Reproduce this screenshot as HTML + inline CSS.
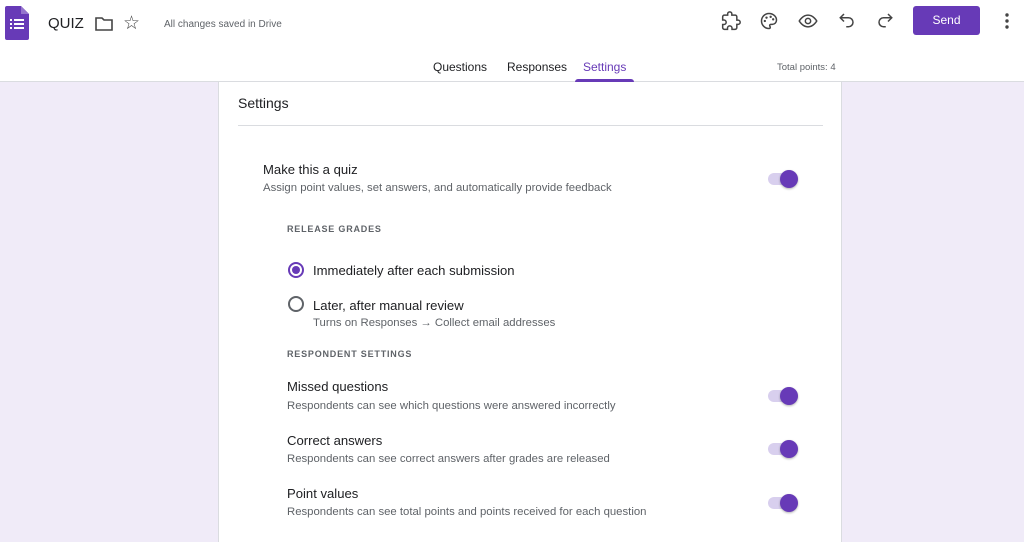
<!DOCTYPE html>
<html><head><meta charset="utf-8"><style>
*{margin:0;padding:0;box-sizing:border-box}
body{width:1024px;height:538px;overflow:hidden;background:#f0ebf8;font-family:"Liberation Sans",Arial,sans-serif;position:relative;color:#202124}
.hdr{position:absolute;left:0;top:0;width:1024px;height:82px;background:#fff;border-bottom:1px solid #dadce0}
.a{position:absolute;white-space:nowrap}
.card{position:absolute;left:218px;top:82px;width:624px;height:460px;background:#fff;border-left:1px solid #dadce0;border-right:1px solid #dadce0}
.tog{position:absolute;width:32px;height:14px}
.tog .t{position:absolute;left:0;top:0;width:30px;height:12px;border-radius:6px;background:#d8cfee}
.tog .k{position:absolute;left:12px;top:-3px;width:18px;height:18px;border-radius:50%;background:#673ab7;box-shadow:0 1px 2px rgba(0,0,0,.3)}
.h{font-size:13.1px;color:#202124}
.s{font-size:11.35px;color:#5f6368}
.cap{font-size:9px;letter-spacing:.8px;color:#5f6368;font-weight:bold}
</style></head><body>
<div class="hdr">
<svg class="a" style="left:5px;top:6px" width="24" height="34" viewBox="0 0 24 34"><path d="M2 0h14l8 8v24a2 2 0 0 1-2 2H2a2 2 0 0 1-2-2V2a2 2 0 0 1 2-2z" fill="#673ab7"/><path d="M16 0l8 8h-8z" fill="#9575cd"/><g fill="#fff"><rect x="5" y="13" width="2" height="2"/><rect x="9" y="13" width="10" height="2"/><rect x="5" y="17" width="2" height="2"/><rect x="9" y="17" width="10" height="2"/><rect x="5" y="21" width="2" height="2"/><rect x="9" y="21" width="10" height="2"/></g></svg>
<div class="a" style="left:48px;top:15px;font-size:15px">QUIZ</div>
<svg class="a" style="left:95px;top:16px" width="18" height="16" viewBox="0 0 18 16"><path d="M1 2h6l2 2h8v10H1z" fill="none" stroke="#444" stroke-width="1.6"/></svg>
<div class="a" style="left:123px;top:12px;font-size:19px;color:#444">☆</div>
<div class="a" style="left:164px;top:19px;font-size:10px;color:#5f6368">All changes saved in Drive</div>
<svg class="a" style="left:721px;top:11px" width="20" height="20" viewBox="0 0 24 24"><path d="M20.5 11H19V7a2 2 0 0 0-2-2h-4V3.5a2.5 2.5 0 0 0-5 0V5H4a2 2 0 0 0-2 2v3.8h1.5a2.7 2.7 0 0 1 0 5.4H2V20a2 2 0 0 0 2 2h3.8v-1.5a2.7 2.7 0 0 1 5.4 0V22H17a2 2 0 0 0 2-2v-4h1.5a2.5 2.5 0 0 0 0-5z" fill="none" stroke="#444" stroke-width="1.8"/></svg>
<svg class="a" style="left:759px;top:11px" width="20" height="20" viewBox="0 0 24 24"><path d="M12 3a9 9 0 0 0 0 18c1 0 1.5-.7 1.5-1.5 0-.9-.7-1.2-.7-2 0-.8.7-1.5 1.5-1.5H16a5 5 0 0 0 5-5c0-4.4-4-8-9-8z" fill="none" stroke="#444" stroke-width="1.8"/><circle cx="7" cy="12" r="1.4" fill="#444"/><circle cx="9" cy="8" r="1.4" fill="#444"/><circle cx="14" cy="7" r="1.4" fill="#444"/><circle cx="17" cy="10" r="1.4" fill="#444"/></svg>
<svg class="a" style="left:797px;top:11px" width="22" height="20" viewBox="0 0 24 24"><path d="M1.5 12S5.5 5 12 5s10.5 7 10.5 7-4 7-10.5 7S1.5 12 1.5 12z" fill="none" stroke="#444" stroke-width="1.8"/><circle cx="12" cy="12" r="3.2" fill="none" stroke="#444" stroke-width="1.8"/></svg>
<svg class="a" style="left:838px;top:11px" width="18" height="18" viewBox="0 0 24 24"><path d="M8 4L3 9l5 5M3 9h11a6 6 0 0 1 0 12h-3" fill="none" stroke="#444" stroke-width="2"/></svg>
<svg class="a" style="left:876px;top:11px" width="18" height="18" viewBox="0 0 24 24"><path d="M16 4l5 5-5 5M21 9H10a6 6 0 0 0 0 12h3" fill="none" stroke="#444" stroke-width="2"/></svg>
<div class="a" style="left:913px;top:6px;width:67px;height:29px;background:#673ab7;border-radius:3px;color:#fff;font-size:12px;text-align:center;line-height:29px">Send</div>
<svg class="a" style="left:1004px;top:12px" width="6" height="18" viewBox="0 0 6 18"><circle cx="3" cy="3" r="1.7" fill="#444"/><circle cx="3" cy="9" r="1.7" fill="#444"/><circle cx="3" cy="15" r="1.7" fill="#444"/></svg>
<div class="a" style="left:433px;top:60px;font-size:12px;color:#202124">Questions</div>
<div class="a" style="left:507px;top:60px;font-size:12px;color:#202124">Responses</div>
<div class="a" style="left:583px;top:60px;font-size:12px;color:#673ab7">Settings</div>
<div class="a" style="left:575px;top:79px;width:59px;height:3px;background:#673ab7;border-radius:3px 3px 0 0"></div>
<div class="a" style="left:777px;top:62px;font-size:9.5px;color:#5f6368">Total points: 4</div>
</div>
<div class="card">
<div class="a" style="left:19px;top:13px;font-size:14px">Settings</div>
<div class="a" style="left:19px;top:43px;width:585px;height:1px;background:#dadce0"></div>
<div class="a h" style="left:44px;top:80px">Make this a quiz</div>
<div class="a s" style="left:44px;top:100px">Assign point values, set answers, and automatically provide feedback</div>
<div class="tog" style="left:549px;top:91px"><div class="t"></div><div class="k"></div></div>
<div class="a cap" style="left:68px;top:142px">RELEASE GRADES</div>
<div class="a" style="left:69px;top:180px;width:16px;height:16px;border:2px solid #673ab7;border-radius:50%"><div style="margin:2px;width:8px;height:8px;border-radius:50%;background:#673ab7"></div></div>
<div class="a h" style="left:94px;top:181px">Immediately after each submission</div>
<div class="a" style="left:69px;top:214px;width:16px;height:16px;border:2px solid #5f6368;border-radius:50%"></div>
<div class="a h" style="left:94px;top:216px">Later, after manual review</div>
<div class="a s" style="left:94px;top:235px">Turns on Responses → Collect email addresses</div>
<div class="a cap" style="left:68px;top:267px">RESPONDENT SETTINGS</div>
<div class="a h" style="left:68px;top:297px">Missed questions</div>
<div class="a s" style="left:68px;top:318px">Respondents can see which questions were answered incorrectly</div>
<div class="tog" style="left:549px;top:308px"><div class="t"></div><div class="k"></div></div>
<div class="a h" style="left:68px;top:351px">Correct answers</div>
<div class="a s" style="left:68px;top:371px">Respondents can see correct answers after grades are released</div>
<div class="tog" style="left:549px;top:361px"><div class="t"></div><div class="k"></div></div>
<div class="a h" style="left:68px;top:404px">Point values</div>
<div class="a s" style="left:68px;top:424px">Respondents can see total points and points received for each question</div>
<div class="tog" style="left:549px;top:415px"><div class="t"></div><div class="k"></div></div>
</div>
</body></html>
